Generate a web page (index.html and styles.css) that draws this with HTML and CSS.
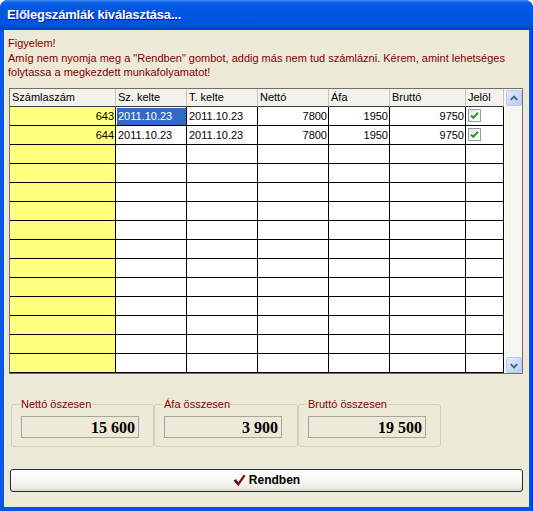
FILE: index.html
```html
<!DOCTYPE html>
<html>
<head>
<meta charset="utf-8">
<link rel="stylesheet" href="styles.css">
</head>
<body>
<div class="window">
  <div class="titlebar"><span class="title">Előlegszámlák kiválasztása...</span></div>
  <div class="client">
    <div class="msg">
      <p>Figyelem!</p>
      <p>Amíg nem nyomja meg a "Rendben" gombot, addig más nem tud számlázni. Kérem, amint lehetséges folytassa a megkezdett munkafolyamatot!</p>
    </div>
    <div class="grid">
      <table class="tbl">
        <colgroup>
          <col class="c1"><col class="c2"><col class="c3"><col class="c4"><col class="c5"><col class="c6"><col class="c7">
        </colgroup>
        <thead>
          <tr><th>Számlaszám</th><th>Sz. kelte</th><th>T. kelte</th><th>Nettó</th><th>Áfa</th><th>Bruttó</th><th>Jelöl</th></tr>
        </thead>
        <tbody>
          <tr><td class="key num">643</td><td class="sel">2011.10.23</td><td>2011.10.23</td><td class="num">7800</td><td class="num">1950</td><td class="num">9750</td><td><span class="chk"><svg width="11" height="11" viewBox="0 0 11 11"><path d="M2 5.5 L4.3 7.8 L9 2.8" fill="none" stroke="#21a121" stroke-width="2"/></svg></span></td></tr>
          <tr><td class="key num">644</td><td>2011.10.23</td><td>2011.10.23</td><td class="num">7800</td><td class="num">1950</td><td class="num">9750</td><td><span class="chk"><svg width="11" height="11" viewBox="0 0 11 11"><path d="M2 5.5 L4.3 7.8 L9 2.8" fill="none" stroke="#21a121" stroke-width="2"/></svg></span></td></tr>
          <tr><td class="key"></td><td></td><td></td><td></td><td></td><td></td><td></td></tr>
          <tr><td class="key"></td><td></td><td></td><td></td><td></td><td></td><td></td></tr>
          <tr><td class="key"></td><td></td><td></td><td></td><td></td><td></td><td></td></tr>
          <tr><td class="key"></td><td></td><td></td><td></td><td></td><td></td><td></td></tr>
          <tr><td class="key"></td><td></td><td></td><td></td><td></td><td></td><td></td></tr>
          <tr><td class="key"></td><td></td><td></td><td></td><td></td><td></td><td></td></tr>
          <tr><td class="key"></td><td></td><td></td><td></td><td></td><td></td><td></td></tr>
          <tr><td class="key"></td><td></td><td></td><td></td><td></td><td></td><td></td></tr>
          <tr><td class="key"></td><td></td><td></td><td></td><td></td><td></td><td></td></tr>
          <tr><td class="key"></td><td></td><td></td><td></td><td></td><td></td><td></td></tr>
          <tr><td class="key"></td><td></td><td></td><td></td><td></td><td></td><td></td></tr>
          <tr><td class="key"></td><td></td><td></td><td></td><td></td><td></td><td></td></tr>
        </tbody>
      </table>
      <div class="vscroll">
        <div class="sbtn"><svg width="15" height="15" viewBox="0 0 15 15"><path d="M4 9 L7.5 5.5 L11 9" fill="none" stroke="#4d6185" stroke-width="2"/></svg></div>
        <div class="track"></div>
        <div class="sbtn"><svg width="15" height="15" viewBox="0 0 15 15"><path d="M4 6 L7.5 9.5 L11 6" fill="none" stroke="#4d6185" stroke-width="2"/></svg></div>
      </div>
    </div>
    <div class="totals">
      <fieldset class="group g1">
        <legend>Nettó öszesen</legend>
        <div class="valbox">15 600</div>
      </fieldset>
      <fieldset class="group g2">
        <legend>Áfa összesen</legend>
        <div class="valbox">3 900</div>
      </fieldset>
      <fieldset class="group g3">
        <legend>Bruttó összesen</legend>
        <div class="valbox">19 500</div>
      </fieldset>
    </div>
    <button class="ok"><svg class="okicon" width="13" height="13" viewBox="0 0 13 13"><path d="M0.5 6.5 L3 5 L5.2 8.3 L11 0.5 L12.5 1.8 L5.3 12.2 Z" fill="#6b0f14"/></svg><span>Rendben</span></button>
  </div>
</div>
</body>
</html>
```
FILE: styles.css
```css
* { box-sizing: border-box; }
html, body { margin: 0; padding: 0; }
body {
  width: 533px;
  height: 511px;
  overflow: hidden;
  background: #ffffff;
  font-family: "Liberation Sans", Arial, sans-serif;
  font-size: 11px;
  color: #000;
}
.window {
  width: 533px;
  height: 511px;
  display: flex;
  flex-direction: column;
  background: linear-gradient(to right, #0831d9 0, #166aee 1px, #0055e5 2px, #0055e5 531px, #0831d9 532px);
  border-radius: 8px 8px 0 0;
}
.titlebar {
  height: 30px;
  flex: none;
  display: flex;
  align-items: center;
  padding: 0 0 1px 7px;
  border-radius: 8px 8px 0 0;
  background: linear-gradient(to bottom, #3f8cf3 0, #2a7cf0 1px, #0a5fe4 3px, #0058e6 8px, #0055e3 16px, #0053df 24px, #0049cf 28px, #003fc0 30px);
}
.title {
  color: #ffffff;
  font-weight: bold;
  font-size: 13px;
  letter-spacing: -0.2px;
  text-shadow: 1px 1px 0 #0a1a8a;
}
.client {
  flex: 1;
  margin: 0 4px 4px 4px;
  background: #ece9d8;
  padding-top: 6px;
  display: flex;
  flex-direction: column;
}
.msg {
  padding-left: 4px;
  color: #840000;
  line-height: 14px;
}
.msg p { margin: 0; }
.msg p + p { margin-top: 1px; }

.grid {
  margin: 9px 0 0 5px;
  width: 514px;
  height: 286px;
  border: 1px solid #6f6f6f;
  background: #ffffff;
  display: flex;
  flex: none;
}
.tbl {
  width: 494px;
  border-collapse: separate;
  border-spacing: 0;
  table-layout: fixed;
  align-self: flex-start;
}
.c1 { width: 106px; }
.c2 { width: 71px; }
.c3 { width: 71px; }
.c4 { width: 71px; }
.c5 { width: 61px; }
.c6 { width: 76px; }
.c7 { width: 38px; }
.tbl th {
  height: 18px;
  padding: 0 0 0 2px;
  font-weight: normal;
  text-align: left;
  background: #f3f2ec;
  border-right: 1px solid #c9c7ba;
  border-bottom: 1px solid #3a3a3a;
  line-height: 17px;
  white-space: nowrap;
  overflow: hidden;
}
.tbl th:first-child { padding-left: 2px; }
.tbl td {
  height: 19px;
  padding: 0 0 0 2px;
  border-right: 1px solid #000;
  border-bottom: 1px solid #000;
  line-height: 18px;
  white-space: nowrap;
  overflow: hidden;
  vertical-align: top;
}
.tbl td.num { text-align: right; padding: 0 1px 0 0; }
.tbl td.key { background: #ffff80; }
.tbl td.sel {
  background: #316ac5;
  color: #ffffff;
  box-shadow: inset 1px 1px 0 #ffffff;
}
.chk {
  display: block;
  width: 13px;
  height: 13px;
  margin: 2px 0 0 0;
  border: 1px solid #8f9cab;
  background: linear-gradient(135deg, #e6e6e0 0, #ffffff 80%);
}
.chk svg { display: block; margin: 0; }

.vscroll {
  width: 18px;
  flex: none;
  display: flex;
  flex-direction: column;
  background: #f6f5f0;
  border-left: 1px solid #ffffff;
  padding: 1px 1px 0 1px;
}
.track { flex: 1; }
.sbtn {
  height: 16px;
  width: 16px;
  border: 1px solid #b8caf1;
  border-radius: 2px;
  background: linear-gradient(135deg, #e3ecfd 0, #c8d8f8 60%, #b6cbf5 100%);
  display: flex;
  align-items: center;
  justify-content: center;
}
.sbtn svg { display: block; }

.totals {
  display: flex;
  margin: 23px 0 0 7px;
}
.group {
  margin: 0;
  height: 50px;
  padding: 5px 0 0 9px;
  border: 1px solid #d0d0bf;
  border-radius: 3px;
  min-width: 0;
}
.g1 { width: 143px; }
.g2 { width: 144px; }
.g3 { width: 143px; }
.group legend {
  padding: 0 1px;
  margin-left: -1px;
  color: #840000;
  line-height: 14px;
  font-size: 11px;
}
.valbox {
  width: 118px;
  height: 22px;
  border: 1px solid #a6a69a;
  background: #ece9d8;
  text-align: right;
  padding: 0 3px 0 0;
  font-family: "Liberation Serif", "Times New Roman", serif;
  font-weight: bold;
  font-size: 16px;
  line-height: 21px;
}

.ok {
  margin: 22px 0 0 6px;
  width: 513px;
  height: 23px;
  border: 1px solid #1b2d3e;
  border-radius: 3px;
  background: linear-gradient(to bottom, #ffffff 0, #f7f7f4 50%, #ecebe5 85%, #d8d6ca 100%);
  display: flex;
  align-items: center;
  justify-content: center;
  gap: 3px;
  padding: 0 0 1px 0;
  font-family: "Liberation Sans", Arial, sans-serif;
  font-weight: bold;
  font-size: 12px;
  color: #000;
}
.okicon { display: block; }
```
